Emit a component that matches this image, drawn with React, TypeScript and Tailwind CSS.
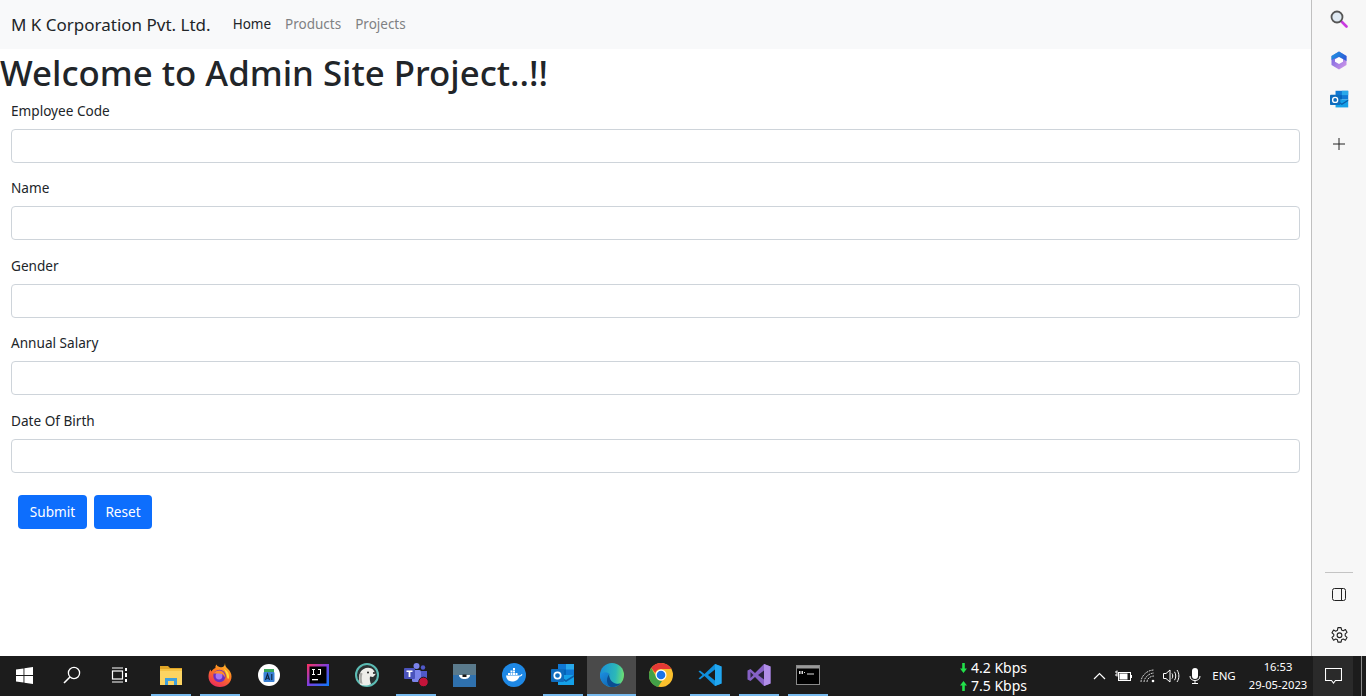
import React from "react";

const font = "font-['Noto_Sans','Open_Sans',sans-serif]";

function Field({ label, mb }: { label: string; mb: string }) {
  return (
    <div className={mb}>
      <label className="block text-[13.6px] leading-[20px] text-[#212529] mb-[8px]">{label}</label>
      <input className="block w-full h-[34px] rounded-[4px] border border-[#ced4da] bg-white" />
    </div>
  );
}

function Slot({ w = "w-[49px]", bar, bg = "", children }: { w?: string; bar?: boolean; bg?: string; children: React.ReactNode }) {
  return (
    <div className={`${w} h-full flex flex-col items-center ${bg}`}>
      <div className="flex-1 flex items-center justify-center">{children}</div>
      <div className={`h-[2px] ${bg ? "w-full" : "w-[40px]"} ${bar ? "bg-[#76b9ed]" : "bg-transparent"}`} />
    </div>
  );
}

const Win = () => (
  <svg width="17" height="17" viewBox="0 0 17 17" fill="#fff">
    <path d="M0 2.5 7.5 1.4V8H0ZM8.4 1.3 17 0V8H8.4ZM0 9H7.5V15.6L0 14.5ZM8.4 9H17V17L8.4 15.7Z" />
  </svg>
);
const Search = () => (
  <svg width="18" height="18" viewBox="0 0 18 18" fill="none" stroke="#fff" strokeWidth="1.3">
    <circle cx="11" cy="7" r="5.6" />
    <path d="M7 11 1 17" strokeWidth="1.6" />
  </svg>
);
const TaskView = () => (
  <svg width="18" height="16" viewBox="0 0 18 16" fill="none" stroke="#fff" strokeWidth="1.2">
    <rect x="1.5" y="4" width="10" height="8" />
    <path d="M1 1h11M1 15h11" />
    <path d="M15 1v3M15 6v4M15 12v3" strokeWidth="2" />
  </svg>
);
const Explorer = () => (
  <svg width="22" height="20" viewBox="0 0 22 20">
    <path d="M0 1h8l2 2h12v3H0Z" fill="#e0a526" />
    <rect y="4" width="22" height="16" fill="#fcd462" />
    <rect y="4" width="22" height="2" fill="#f6c344" />
    <path d="M5 20v-7h12v7h-3v-4H8v4Z" fill="#3f9fdc" />
  </svg>
);
const Firefox = () => (
  <svg width="24" height="24" viewBox="0 0 24 24">
    <defs>
      <linearGradient id="ff" x1="0.8" y1="0" x2="0.3" y2="1">
        <stop offset="0" stopColor="#ffc52c" />
        <stop offset="0.45" stopColor="#ff7a1f" />
        <stop offset="1" stopColor="#ea2a5c" />
      </linearGradient>
    </defs>
    <path d="M17 0c0 3 1 4 3 6 2 2 3.500 4.500 3.500 7.500C23.500 19.500 18.500 24 12 24 5.500 24 .5 19.500 .5 13.500c0-2.500.7-5 2-7 .3 1 .6 1.600 1 2 1-2 2.500-3 4-3.500-.3-1.500 0-2.500 1-3.500.7 1.500 1.500 2 3 2.500 3 1 5.500 0 5.500-4.500Z" fill="url(#ff)" />
    <path d="M16 6c4 2 5.500 5 5 9-1 2-1.500 0-2-1-.5-3-1.500-5.500-3-8Z" fill="#ffdc3c" />
    <circle cx="11.500" cy="13" r="6.200" fill="#6d2fc0" />
    <circle cx="11" cy="13" r="3.400" fill="#a876f0" />
    <path d="M5.500 10.500c2-3 6-4 9-2 2 1.500 3 4 2.500 6-1-2-2-3-3.500-3.500-2.500-.8-5.500-.5-8-.5Z" fill="#ff8a2a" />
  </svg>
);
const AI = () => (
  <svg width="22" height="22" viewBox="0 0 22 22">
    <circle cx="11" cy="11" r="11" fill="#fff" />
    <path d="M6 5h10v4H6Z" fill="#3ba55d" />
    <rect x="5.500" y="8" width="11" height="10" rx="1" fill="#3b82d6" />
    <path d="M7.500 16 9.500 10l2 6M8.200 14.200h2.600M13.800 10v6" stroke="#10243f" strokeWidth="1.100" fill="none" />
  </svg>
);
const IJ = () => (
  <svg width="22" height="22" viewBox="0 0 22 22">
    <defs>
      <linearGradient id="ij" x1="0" y1="0" x2="1" y2="1">
        <stop offset="0" stopColor="#fe315d" />
        <stop offset="0.5" stopColor="#7c3fe0" />
        <stop offset="1" stopColor="#087cfa" />
      </linearGradient>
    </defs>
    <rect width="22" height="22" fill="url(#ij)" />
    <rect x="2.500" y="2.500" width="17" height="17" fill="#000" />
    <path d="M5 5h3v1H7v4h1v1H5v-1h1V6H5ZM11 5h3v5c0 1-1 1-2 1h-1.500v-1h1.500c.5 0 1 0 1-.6V6h-2Z" fill="#fff" />
    <rect x="5" y="15" width="6" height="1.300" fill="#fff" />
  </svg>
);
const Dbeaver = () => (
  <svg width="24" height="24" viewBox="0 0 24 24">
    <circle cx="12" cy="12" r="11" fill="#2b3233" stroke="#5cbcb4" strokeWidth="2" />
    <path d="M5 21c-1.500-5-1.500-9 .5-12 2-3.500 7-5.500 11-3.500 2 1 3.500 3.500 4 6l-2.500 2.500-3 -.5c-.5 2.500 0 5 1 7.500-3.500 2-8 2-11 .5Z" fill="#eeeeea" />
    <path d="M5 20c-1-4-1-8 .5-10.500l2 1c-1 3-1 6 0 10.500Z" fill="#a9a9a5" />
    <circle cx="13" cy="9.500" r="1" fill="#222" />
    <circle cx="19" cy="10" r="1.100" fill="#222" />
  </svg>
);
const Teams = () => (
  <svg width="26" height="26" viewBox="0 0 26 26">
    <circle cx="13.500" cy="4" r="3" fill="#7b83eb" />
    <circle cx="20" cy="5.500" r="2.200" fill="#5059c9" />
    <rect x="9" y="8" width="9" height="12" rx="1.500" fill="#7b83eb" />
    <path d="M18 9h6v6c0 2-1 4-3 4h-3Z" fill="#5059c9" />
    <rect x="1" y="6" width="11" height="11" rx="1" fill="#4b53bc" />
    <path d="M3.500 8.500h6V10H7.400v5H5.600v-5H3.500Z" fill="#fff" />
    <circle cx="20.500" cy="20" r="4.800" fill="#c4143a" stroke="#1c1c1c" strokeWidth="1" />
  </svg>
);
const Mongo = () => (
  <svg width="23" height="23" viewBox="0 0 23 23">
    <rect width="23" height="11" fill="#5a7a8c" />
    <rect y="11" width="23" height="12" fill="#2f71ae" />
    <path d="M6 11h11c0 2.500-2.500 4-5.500 4S6 13.500 6 11Z" fill="#fff" />
    <rect x="9.500" y="10.500" width="4" height="2.500" fill="#1a1a1a" />
  </svg>
);
const Docker = () => (
  <svg width="24" height="24" viewBox="0 0 24 24">
    <circle cx="12" cy="12" r="12" fill="#1e88e5" />
    <path d="M4 12.500h13c1 0 2-.5 2.500-1.500l1 .5c-.5 1.500-2 2-3 2-1 3-4 5-7.500 5-3.500 0-5.500-2-6-6Z" fill="#fff" />
    <path d="M6 10h2v2H6ZM8.500 10h2v2h-2ZM11 10h2v2h-2ZM13.500 10h2v2h-2ZM8.500 7.500h2v2h-2ZM11 7.500h2v2h-2ZM11 5h2v2h-2Z" fill="#fff" />
  </svg>
);
const Outlook = ({ s = 24 }: { s?: number }) => (
  <svg width={s} height={s} viewBox="0 0 24 24">
    <rect x="7" y="1" width="16" height="11" fill="#0f78d4" />
    <rect x="15" y="1" width="8" height="5.500" fill="#28a8ea" />
    <rect x="7" y="6.500" width="8" height="5.500" fill="#0364b8" />
    <path d="M7 12h16v10H7Z" fill="#14a0e8" />
    <path d="M7 12l8 5 8-5v2l-8 5-8-5Z" fill="#0a5ea8" />
    <rect x="0" y="6" width="13" height="13" rx="1" fill="#0f6cbd" />
    <circle cx="6.500" cy="12.500" r="3.200" fill="none" stroke="#fff" strokeWidth="1.700" />
  </svg>
);
const Edge = () => (
  <svg width="24" height="24" viewBox="0 0 24 24">
    <defs>
      <linearGradient id="ed" x1="0" y1="0.400" x2="1" y2="0.500">
        <stop offset="0" stopColor="#1a8fd8" />
        <stop offset="0.650" stopColor="#2cb8b8" />
        <stop offset="1" stopColor="#6fe070" />
      </linearGradient>
      <linearGradient id="ed2" x1="0" y1="0" x2="1" y2="1">
        <stop offset="0" stopColor="#1c8fe0" />
        <stop offset="1" stopColor="#0c59a4" />
      </linearGradient>
    </defs>
    <circle cx="12" cy="12" r="12" fill="url(#ed)" />
    <path d="M0 12c0 7 5.500 12 12 12 3.500 0 6.500-1.200 8.500-3.500-4 1-7.500.5-10-1.500C7.500 16.500 7 13 9 10.500 6 8.500 2 9 0 12Z" fill="url(#ed2)" />
    <path d="M9.500 14c.5 3 3 6 7 6.800 1.500.3 3 0 4-.3-2 2.300-5 3.500-8.500 3.500-3 0-5-3.500-5-6.500 0-3 1-5 2.500-7-.5 1.200-.5 2.500 0 3.500Z" fill="#0b4d91" />
  </svg>
);
const Chrome = () => (
  <svg width="24" height="24" viewBox="0 0 24 24">
    <circle cx="12" cy="12" r="12" fill="#fbc02d" />
    <path d="M12 0a12 12 0 0 1 10.400 6H12a6 6 0 0 0-5.700 4L2.300 5A12 12 0 0 1 12 0Z" fill="#e53935" />
    <path d="M2.300 5l5.200 9.200a6 6 0 0 0 5.500 3.800L9 24A12 12 0 0 1 2.300 5Z" fill="#43a047" />
    <circle cx="12" cy="12" r="5.500" fill="#fff" />
    <circle cx="12" cy="12" r="4.300" fill="#1a73e8" />
  </svg>
);
const VSCode = () => (
  <svg width="24" height="24" viewBox="0 0 24 24">
    <path d="M17 1 23.500 3.500V20.500L17 23 6.500 13 2 16.500.5 15.500 4.500 12 .5 8.500 2 7.500 6.500 11Z" fill="#0f8fdc" />
    <path d="M17 6.500 10 12l7 5.500Z" fill="#1c1c1c" />
    <path d="M17 1 23.500 3.500V20.500L17 23Z" fill="#22a7f0" />
  </svg>
);
const VS = () => (
  <svg width="24" height="24" viewBox="0 0 24 24">
    <path d="M17 1 23.500 3.500V20.500L17 23 8 14 3.500 18 .5 16.500V7.500L3.500 6 8 10Z" fill="#8661c5" />
    <path d="M17 7.500 11 12l6 4.500Z" fill="#2a2440" />
    <path d="M3.500 9v6L6.500 12Z" fill="#2a2440" />
    <path d="M17 1 23.500 3.500V20.500L17 23Z" fill="#b18ee8" />
  </svg>
);
const Cmd = () => (
  <svg width="24" height="20" viewBox="0 0 24 20">
    <rect x=".5" y=".5" width="23" height="19" fill="#000" stroke="#8a8a8a" />
    <rect x="1" y="1" width="22" height="2.500" fill="#9a9a9a" />
    <path d="M3 6h1.500v3H3ZM5.500 6h1.500v3H5.500ZM8 7h1v1H8ZM11 8.500h7v1h-7Z" fill="#ddd" />
  </svg>
);

const Arrow = ({ up }: { up?: boolean }) => (
  <svg width="7" height="10" viewBox="0 0 7 10" fill="#22e04a">
    {up ? <path d="M3.500 0 7 4.500H4.800V10H2.200V4.500H0Z" /> : <path d="M3.500 10 7 5.500H4.800V0H2.200V5.500H0Z" />}
  </svg>
);

const Chevron = () => (
  <svg width="13" height="8" viewBox="0 0 13 8" fill="none" stroke="#fff" strokeWidth="1.200"><path d="M1 7 6.500 1.500 12 7" /></svg>
);
const Battery = () => (
  <svg width="17" height="12" viewBox="0 0 17 12" fill="none" stroke="#fff">
    <path d="M0 2h2M0 5h2M2 .5v6" />
    <rect x="3.500" y="2.500" width="12" height="8" />
    <rect x="4.500" y="3.500" width="8" height="6" fill="#fff" stroke="none" />
    <rect x="15.500" y="5" width="1.500" height="3" fill="#fff" stroke="none" />
  </svg>
);
const Wifi = () => (
  <svg width="15" height="14" viewBox="0 0 15 14" fill="none" stroke="#cfcfcf" strokeWidth="1">
    <path d="M1 13C1 7 7 1 14 1M4 13c0-4 5-9 10-9M7 13c0-3 3-6 7-6" strokeDasharray="2 .8" />
    <circle cx="13" cy="12" r="1.300" fill="#fff" stroke="none" />
  </svg>
);
const Volume = () => (
  <svg width="17" height="14" viewBox="0 0 17 14" fill="none" stroke="#fff" strokeWidth="1">
    <path d="M.5 4.500h2.500L7 1v12L3 9.500H.5Z" />
    <path d="M9 4.500c1 1.500 1 3.500 0 5M11.500 2.800c1.700 2.500 1.700 5.900 0 8.400M14 1c2.500 3.500 2.500 8.500 0 12" />
  </svg>
);
const Mic = () => (
  <svg width="12" height="16" viewBox="0 0 12 16">
    <rect x="3" y="0" width="6" height="11" rx="3" fill="#fff" />
    <path d="M1 8c0 3 2 4.500 5 4.500S11 11 11 8M6 12.500V15M3 15.500h6" fill="none" stroke="#fff" />
  </svg>
);
const Notif = () => (
  <svg width="17" height="16" viewBox="0 0 17 16" fill="none" stroke="#fff" strokeWidth="1.100"><path d="M.5.5h16v12h-6L8.500 15l-2-2.500h-6Z" /></svg>
);

const SideCopilot = () => (
  <svg width="18" height="19" viewBox="0 0 18 19">
    <defs>
      <linearGradient id="cp1" x1="0" y1="0" x2="1" y2="0.500">
        <stop offset="0" stopColor="#1f9ae0" />
        <stop offset="1" stopColor="#2a5fd8" />
      </linearGradient>
      <linearGradient id="cp2" x1="0" y1="0" x2="1" y2="1">
        <stop offset="0" stopColor="#6a5fe0" />
        <stop offset="1" stopColor="#d69ae8" />
      </linearGradient>
    </defs>
    <path d="M9 .5 16.500 5V14L9 18.500 1.500 14V5Z" fill="url(#cp2)" strokeLinejoin="round" />
    <path d="M9 .5 16.500 5V10L12 7.500 9 6 5 7.500 1.500 9V5Z" fill="url(#cp1)" />
    <path d="M9 6 13 8.300V10.700L9 13 5 10.700V8.300Z" fill="#fff" />
  </svg>
);
const SideSearch = () => (
  <svg width="18" height="18" viewBox="0 0 18 18" fill="none">
    <path d="M11 11 16.500 16.500" stroke="#c93be0" strokeWidth="2.600" strokeLinecap="round" />
    <circle cx="7" cy="7" r="5.500" fill="#dfe9f2" stroke="#555" strokeWidth="1.800" />
  </svg>
);
const Plus = () => (
  <svg width="12" height="12" viewBox="0 0 12 12" stroke="#222" strokeWidth="1" fill="none"><path d="M6 0v12M0 6h12" /></svg>
);
const Panel = () => (
  <svg width="14" height="13" viewBox="0 0 14 13" fill="none" stroke="#222" strokeWidth="1"><rect x=".5" y=".5" width="13" height="12" rx="2" /><path d="M9.500 .5v12" /></svg>
);
const Gear = () => (
  <svg width="19" height="19" viewBox="0 0 24 24" fill="none" stroke="#222" strokeWidth="1.400" strokeLinejoin="round">
    <path d="M10 2h4l.6 3 2.200 1 2.700-1.500 2 3.500-2.300 2v2.400l2.300 2-2 3.500-2.700-1.500-2.200 1-.6 3h-4l-.6-3-2.200-1-2.700 1.500-2-3.500 2.300-2V10.500l-2.300-2 2-3.500 2.700 1.500 2.200-1Z" />
    <circle cx="12" cy="11.700" r="3" />
  </svg>
);

export default function App() {
  return (
    <div className={`w-[1366px] h-[696px] overflow-hidden flex flex-col bg-white ${font}`}>
      <div className="h-[656px] flex">
        <main className="w-[1311px] flex flex-col">
          <nav className="h-[49px] shrink-0 bg-[#f8f9fa] flex items-center pl-[11px]">
            <span className="text-[17px] text-[#212529] mr-[22px]">M K Corporation Pvt. Ltd.</span>
            <div className="flex gap-[14px] text-[13.5px]">
              <span className="text-[#212529]">Home</span>
              <span className="text-[#7f8183]">Products</span>
              <span className="text-[#7f8183]">Projects</span>
            </div>
          </nav>
          <h1 className="text-[34.8px] leading-[47px] font-medium text-[#212529]">Welcome to Admin Site Project..!!</h1>
          <form className="pl-[11px] pr-[11px] pt-[5px]">
            <Field label="Employee Code" mb="mb-[15px]" />
            <Field label="Name" mb="mb-[16px]" />
            <Field label="Gender" mb="mb-[15px]" />
            <Field label="Annual Salary" mb="mb-[16px]" />
            <Field label="Date Of Birth" mb="mb-[22px]" />
            <div className="flex gap-[7px] pl-[7px]">
              <button type="button" className="w-[69px] h-[34px] rounded-[4px] bg-[#0d6efd] text-white text-[13.6px]">Submit</button>
              <button type="button" className="w-[58px] h-[34px] rounded-[4px] bg-[#0d6efd] text-white text-[13.6px]">Reset</button>
            </div>
          </form>
        </main>
        <aside className="w-[55px] bg-[#f7f7f7] border-l border-[#c0c0c0] flex flex-col items-center pt-[9px] pb-[12px]">
          <div className="h-[19px] flex items-center justify-center"><SideSearch /></div>
          <div className="mt-[23px] h-[19px] flex items-center justify-center"><SideCopilot /></div>
          <div className="mt-[20px] h-[19px] flex items-center justify-center"><Outlook s={19} /></div>
          <div className="mt-[29px] h-[12px] flex items-center justify-center"><Plus /></div>
          <div className="mt-auto w-[28px] h-px bg-[#c4c4c4] mb-[15px]" />
          <div className="h-[13px] flex items-center justify-center"><Panel /></div>
          <div className="mt-[26px] h-[17px] flex items-center justify-center"><Gear /></div>
        </aside>
      </div>
      <footer className="h-[40px] bg-[#1c1c1c] flex items-stretch text-white">
        <Slot w="w-[48px]"><Win /></Slot>
        <Slot w="w-[48px]"><Search /></Slot>
        <Slot w="w-[48px]"><TaskView /></Slot>
        <div className="w-[2px]" />
        <Slot bar><Explorer /></Slot>
        <Slot bar><Firefox /></Slot>
        <Slot><AI /></Slot>
        <Slot><IJ /></Slot>
        <Slot><Dbeaver /></Slot>
        <Slot bar><Teams /></Slot>
        <Slot><Mongo /></Slot>
        <Slot><Docker /></Slot>
        <Slot bar><Outlook /></Slot>
        <Slot bar bg="bg-[#4a4a4a]"><Edge /></Slot>
        <Slot><Chrome /></Slot>
        <Slot bar><VSCode /></Slot>
        <Slot bar><VS /></Slot>
        <Slot bar><Cmd /></Slot>
        <div className="w-[128px]" />
        <div className="w-[80px] flex flex-col justify-center pt-[2px] text-[14px] leading-[18px]">
          <span className="flex items-center gap-[4px]"><Arrow />4.2 Kbps</span>
          <span className="flex items-center gap-[4px]"><Arrow up />7.5 Kbps</span>
        </div>
        <div className="w-[47px]" />
        <div className="w-[24px] flex items-center justify-center"><Chevron /></div>
        <div className="w-[24px] flex items-center justify-center"><Battery /></div>
        <div className="w-[24px] flex items-center justify-center"><Wifi /></div>
        <div className="w-[24px] flex items-center justify-center"><Volume /></div>
        <div className="w-[24px] flex items-center justify-center"><Mic /></div>
        <div className="w-[34px] flex items-center justify-center text-[11.5px]">ENG</div>
        <div className="w-[72px] pl-[2px] flex flex-col items-center justify-center text-[11.2px] leading-[18px]">
          <span>16:53</span>
          <span>29-05-2023</span>
        </div>
        <div className="w-[40px] bg-[#2a2a2a] flex items-center justify-center"><Notif /></div>
        <div className="w-[8px]" />
        <div className="w-px bg-[#8a8a8a]" />
        <div className="flex-1" />
      </footer>
    </div>
  );
}
